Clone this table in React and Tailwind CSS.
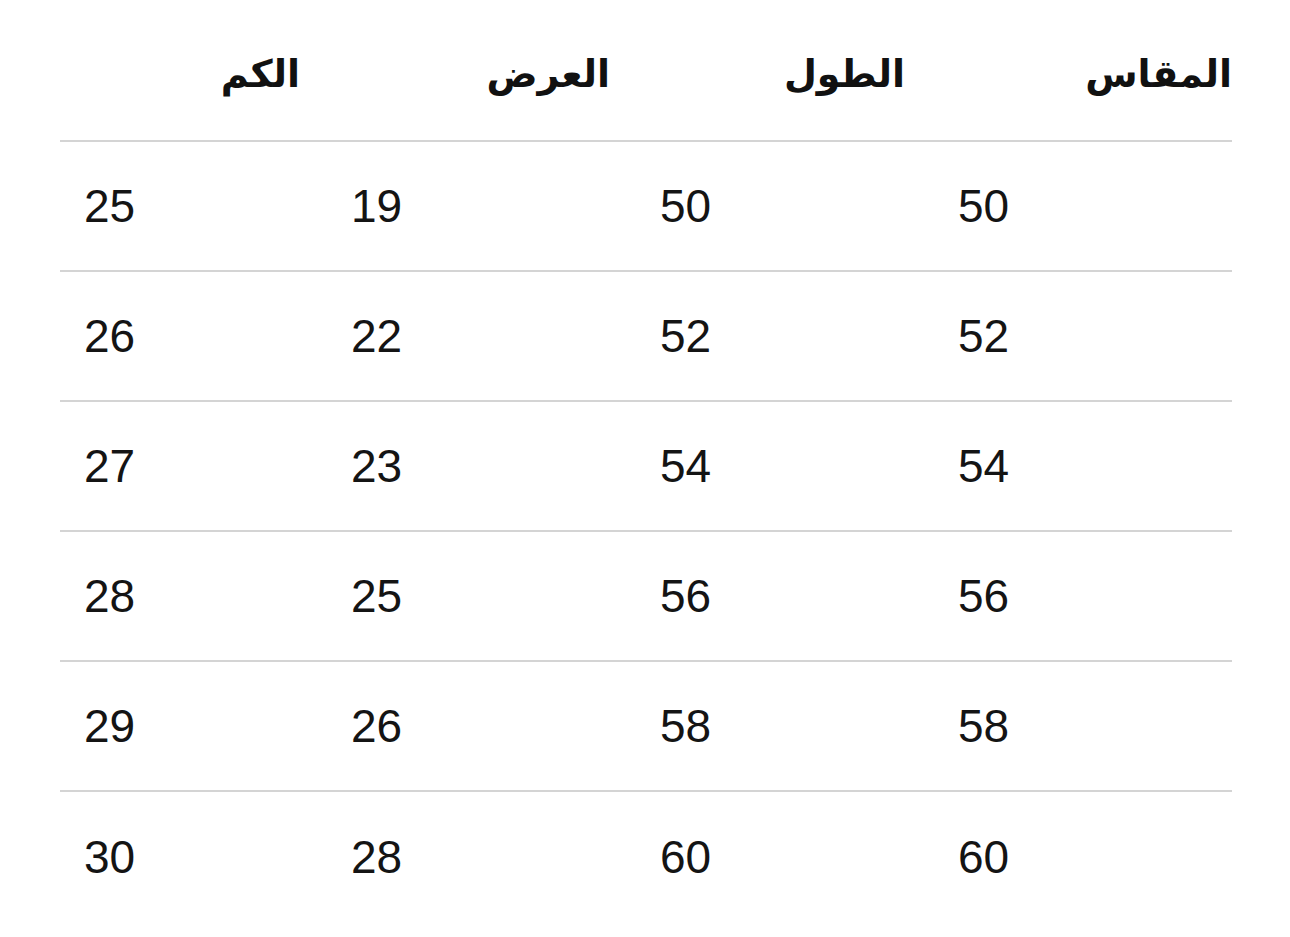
const headers = ["المقاس", "الطول", "العرض", "الكم"];

const rows = [
  ["50", "50", "19", "25"],
  ["52", "52", "22", "26"],
  ["54", "54", "23", "27"],
  ["56", "56", "25", "28"],
  ["58", "58", "26", "29"],
  ["60", "60", "28", "30"],
];

// header padding per column (rtl order)
const headPad = ["pr-0", "pr-[29px]", "pr-[26px]", "pr-[27px]"];

export default function App() {
  return (
    <div className="min-h-screen bg-white">
      <div dir="rtl" className="ml-[60px] mr-[58px] w-[1172px]">
        <div className="grid grid-cols-[298px_298px_309px_267px] h-[142px] border-b-2 border-[#d4d4d4]">
          {headers.map((h, i) => (
            <div
              key={h}
              className={`flex items-center pt-[8px] text-right text-[38px] font-bold text-[#111] ${headPad[i]}`}
              style={{ fontFamily: '"DejaVu Sans", sans-serif' }}
            >
              {h}
            </div>
          ))}
        </div>
        {rows.map((r, ri) => (
          <div
            key={ri}
            className={`grid grid-cols-[298px_298px_309px_267px] h-[130px] ${
              ri < rows.length - 1 ? "border-b-2 border-[#d4d4d4]" : ""
            }`}
          >
            {r.map((v, ci) => (
              <div
                key={ci}
                dir="ltr"
                className="flex items-center justify-start pl-[24px] text-[46px] text-[#141414]"
                style={{ fontFamily: '"Liberation Sans", sans-serif' }}
              >
                {v}
              </div>
            ))}
          </div>
        ))}
      </div>
    </div>
  );
}
